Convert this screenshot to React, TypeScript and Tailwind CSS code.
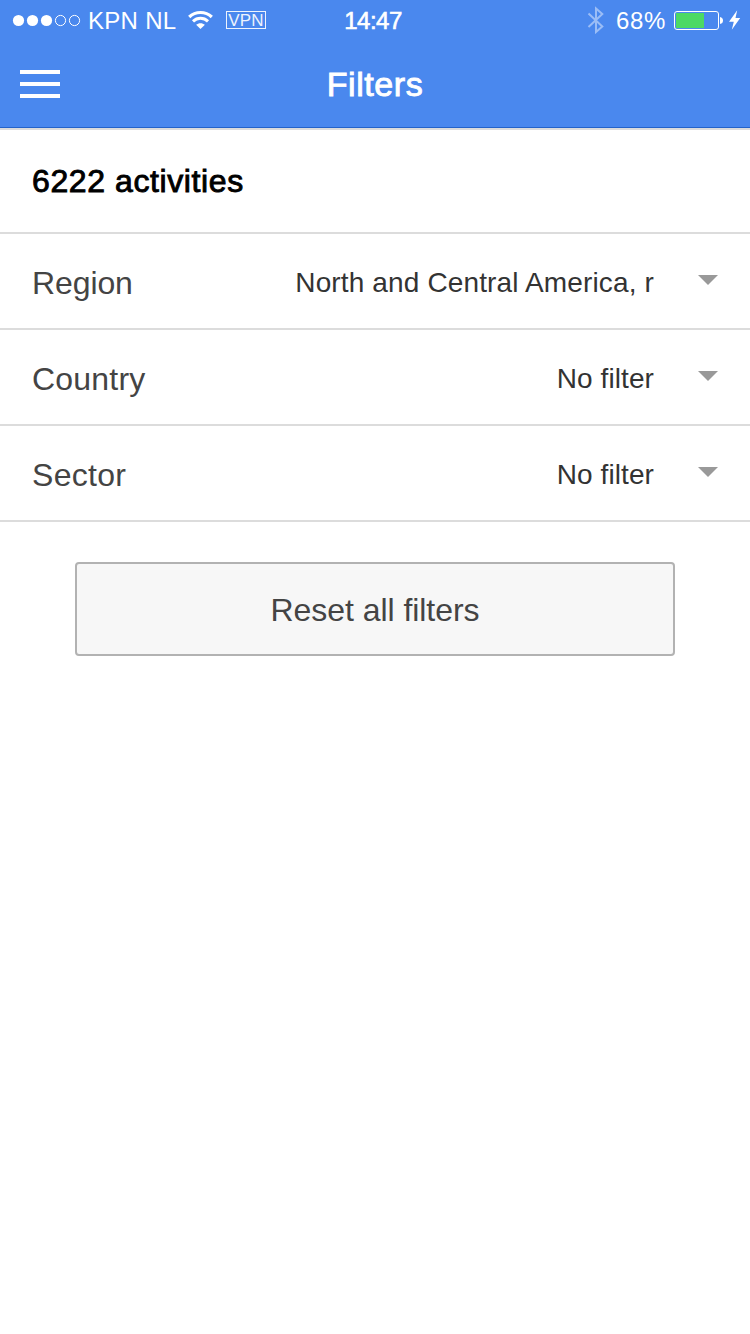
const filters = [
  { label: "Region", value: "North and Central America, r", labelSpacing: "tracking-[-0.1px]", spacing: "tracking-[0.14px]" },
  { label: "Country", value: "No filter", labelSpacing: "tracking-[0.2px]", spacing: "tracking-[0.1px]" },
  { label: "Sector", value: "No filter", labelSpacing: "tracking-[0.3px]", spacing: "tracking-[0.1px]" },
];

function SignalDots() {
  return (
    <svg className="block" width="70" height="20" viewBox="0 0 70 20">
      {[6.5, 20.5, 34.5].map((x) => (
        <circle key={x} cx={x} cy="10.5" r="5.6" fill="white" />
      ))}
      {[48.5, 62.5].map((x) => (
        <circle key={x} cx={x} cy="10.5" r="5.1" fill="none" stroke="white" strokeWidth="1" />
      ))}
    </svg>
  );
}

function Wifi() {
  return (
    <svg className="block" width="26" height="20" viewBox="0 0 26 20" fill="none" stroke="white" strokeWidth="3.2">
      <path d="M1.2 7C7.5 1 17.5 1 23.8 7" />
      <path d="M5 11.3C9.3 7.3 15.7 7.3 20 11.3" strokeWidth="3" />
      <path d="M12.5 19L8.1 14.8C10.7 12.6 14.3 12.6 16.9 14.8Z" fill="white" stroke="none" />
    </svg>
  );
}

function StatusBar() {
  return (
    <div className="grid h-10 grid-cols-[1fr_60px_1fr] items-center leading-10 text-white">
      <div className="flex h-10 items-center pl-3">
        <SignalDots />
        <span className="ml-[6px] h-10 w-[100px] pt-px text-2xl leading-10 tracking-[0.3px] whitespace-nowrap">KPN NL</span>
        <Wifi />
        <span className="ml-[12px] flex h-[18px] w-10 items-center justify-center border border-white pt-px text-[17px] leading-none font-light tracking-[0.1px] opacity-90">
          VPN
        </span>
      </div>
      <span className="-ml-[4px] h-10 pt-px text-center text-2xl leading-10 tracking-[-0.5px] whitespace-nowrap [-webkit-text-stroke:0.6px_white]">14:47</span>
      <div className="flex h-10 items-center justify-end pr-[9px]">
        <svg className="block" width="18" height="28" viewBox="0 0 18 28" fill="none" stroke="#9bbdf6" strokeWidth="2">
          <path d="M1.5 7.5L15.3 20.5L9 26V2.5L15.3 8L1.5 21" />
        </svg>
        <span className="ml-[11px] h-10 w-[58px] pt-px text-2xl leading-10 tracking-[0.7px] whitespace-nowrap">68%</span>
        <svg className="block" width="50" height="20" viewBox="0 0 50 20">
          <rect x=".5" y="1.5" width="44" height="18" rx="2.5" fill="none" stroke="white" />
          <rect x="2" y="3" width="28" height="15" fill="#4cd964" />
          <path d="M46 7Q49 7.5 49 10.5Q49 13.5 46 14Z" fill="white" />
        </svg>
        <svg className="ml-1 block" width="13" height="20" viewBox="0 0 13 20" fill="white">
          <path d="M9.2 .3L1 11.8H5.8L3.8 19.7L12.2 8H7.5Z" />
        </svg>
      </div>
    </div>
  );
}

function TitleBar() {
  return (
    <div className="grid h-[87px] grid-cols-[1fr_auto_1fr] items-start px-5">
      <button type="button" aria-label="Menu" className="mt-[30px] flex w-10 flex-col gap-2">
        <span className="h-1 w-10 bg-white" />
        <span className="h-1 w-10 bg-white" />
        <span className="h-1 w-10 bg-white" />
      </button>
      <h1 className="mt-6 text-[34px] leading-10 tracking-[0.55px] text-white [-webkit-text-stroke:0.9px_white]">
        Filters
      </h1>
    </div>
  );
}

export default function App() {
  return (
    <div className="min-h-[1334px] w-[750px] overflow-hidden bg-white font-['Liberation_Sans',Arial,sans-serif]">
      <header className="border-b border-[#2463c9] bg-[#4a88ee]">
        <StatusBar />
        <TitleBar />
      </header>
      <main>
        <div className="h-[106px] border-y-2 border-[#dcdcdc] px-8 pt-[31px]">
          <h2 className="text-[32px] leading-10 tracking-[0.6px] text-black [-webkit-text-stroke:0.9px_black]">
            6222 activities
          </h2>
        </div>
        {filters.map((f) => (
          <div key={f.label} className="flex h-24 items-start border-b-2 border-[#dcdcdc] pr-8 pl-8">
            <span className={`mt-[29px] text-[32px] leading-10 text-[#444] ${f.labelSpacing}`}>{f.label}</span>
            <span className={`mt-[29px] ml-auto text-[28px] leading-10 whitespace-nowrap text-[#333] ${f.spacing}`}>
              {f.value}
            </span>
            <svg className="mt-[41px] ml-11 block" width="20" height="10" viewBox="0 0 20 10">
              <path d="M0 0H20L10 10Z" fill="#999" />
            </svg>
          </div>
        ))}
        <button
          type="button"
          className="mx-auto mt-10 flex h-[94px] w-[600px] justify-center rounded border-2 border-[#b2b2b2] bg-[#f7f7f7] pt-[26px] text-[32px] leading-10 tracking-[-0.05px] text-[#444]"
        >
          Reset all filters
        </button>
      </main>
    </div>
  );
}
